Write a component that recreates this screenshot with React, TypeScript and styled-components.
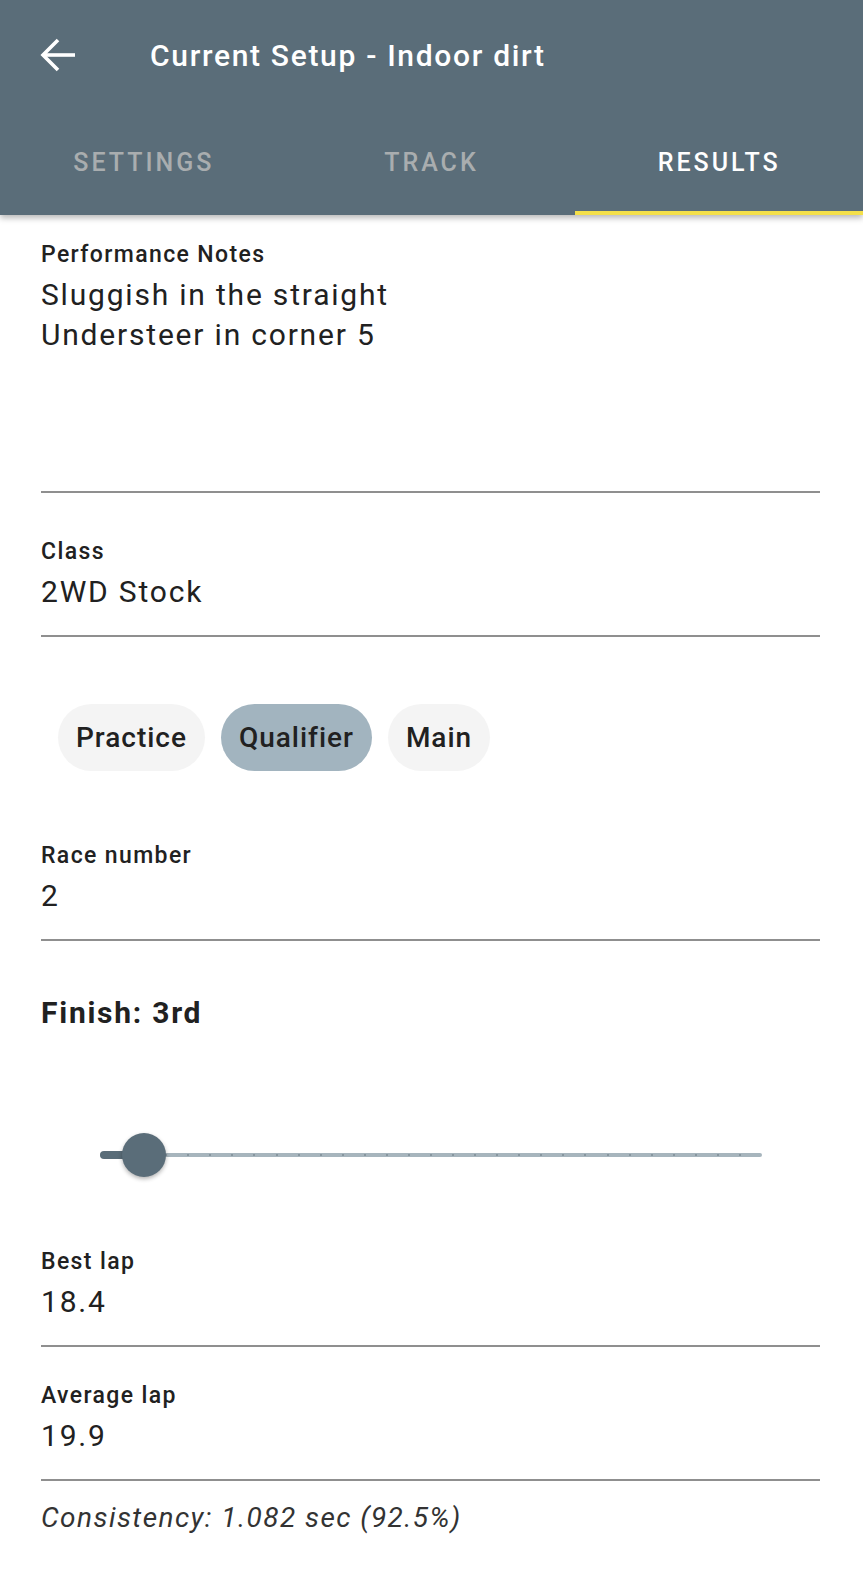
import styled, { createGlobalStyle } from "styled-components";

const Global = createGlobalStyle`
  body {
    margin: 0;
    background: #ffffff;
    font-family: Roboto, "Noto Sans", "Liberation Sans", sans-serif;
    color: #212121;
  }
  * { box-sizing: border-box; }
`;

const Header = styled.header`
  background: #5a6d79;
  box-shadow: 0 3px 6px rgba(0, 0, 0, 0.28);
  position: relative;
  z-index: 1;
`;

const Toolbar = styled.div`
  height: 110px;
  display: flex;
  align-items: center;
  padding-left: 40px;
`;

const Back = styled.button`
  width: 36px;
  height: 36px;
  padding: 0;
  border: none;
  background: none;
  display: flex;
  color: #fff;
`;

const Title = styled.h1`
  margin: 0 0 0 74px;
  font-size: 30px;
  font-weight: 500;
  color: #ffffff;
  letter-spacing: 0.056em;
`;

const Tabs = styled.nav`
  display: grid;
  grid-template-columns: repeat(3, 1fr);
  height: 105px;
`;

const Tab = styled.button<{ $active?: boolean }>`
  border: none;
  background: none;
  font-family: inherit;
  font-size: 25px;
  font-weight: 500;
  letter-spacing: 0.12em;
  text-transform: uppercase;
  color: ${(p) => (p.$active ? "#ffffff" : "#a9adaf")};
  border-bottom: 4px solid ${(p) => (p.$active ? "#f4e04a" : "transparent")};
  padding-top: 4px;
`;

const Content = styled.main`
  padding: 0 43px 40px 41px;
`;

const Field = styled.div<{ $top: number }>`
  margin-top: ${(p) => p.$top}px;
  padding-bottom: 23px;
  border-bottom: 2px solid #8f8f8f;
`;

const Label = styled.div`
  font-size: 23px;
  line-height: 26px;
  font-weight: 500;
  letter-spacing: 0.06em;
  color: #212121;
`;

const Value = styled.div<{ $minHeight?: number }>`
  margin-top: 7px;
  font-size: 30px;
  line-height: 40px;
  letter-spacing: 0.06em;
  color: #212121;
  min-height: ${(p) => p.$minHeight ?? 40}px;
`;

const Chips = styled.div`
  margin-top: 67px;
  padding-left: 17px;
  display: flex;
  gap: 16px;
`;

const Chip = styled.button<{ $selected?: boolean }>`
  height: 67px;
  padding: 0 18px;
  border: none;
  border-radius: 34px;
  font-family: inherit;
  font-size: 28px;
  font-weight: 500;
  letter-spacing: 0.035em;
  color: #212121;
  background: ${(p) => (p.$selected ? "#a2b4bf" : "#f4f4f4")};
`;

const Heading = styled.h2`
  margin: 52px 0 0;
  font-size: 30px;
  line-height: 40px;
  font-weight: 700;
  letter-spacing: 0.058em;
  color: #212121;
`;

const Slider = styled.div`
  position: relative;
  height: 44px;
  margin: 100px 58px 0 59px;
  display: flex;
  align-items: center;
`;

const Track = styled.div`
  position: relative;
  width: 100%;
  height: 4px;
  border-radius: 2px;
  background: #a7b5bd;
`;

const Active = styled.div`
  position: absolute;
  left: 0;
  top: -2px;
  height: 8px;
  border-radius: 4px;
  background: #5a6d79;
`;

const Tick = styled.span`
  position: absolute;
  top: 1px;
  width: 2px;
  height: 2px;
  margin-left: -1px;
  border-radius: 1px;
  background: #7d8d96;
`;

const Thumb = styled.div`
  position: absolute;
  top: 0;
  width: 44px;
  height: 44px;
  margin-left: -22px;
  border-radius: 50%;
  background: #5a6d79;
  box-shadow: 0 2px 4px rgba(0, 0, 0, 0.3);
`;

const Note = styled.p`
  margin: 19px 0 0;
  font-size: 28px;
  line-height: 36px;
  font-style: italic;
  letter-spacing: 0.051em;
  color: #333333;
`;

const STEPS = 30;
const VALUE = 2;

export default function App() {
  const pct = (VALUE / STEPS) * 100;
  return (
    <>
      <Global />
      <Header>
        <Toolbar>
          <Back aria-label="Back">
            <svg width="36" height="36" viewBox="0 0 36 36" fill="none" stroke="#fff" strokeWidth="3.6">
              <path d="M35 18H3" />
              <path d="M18 3L3 18l15 15" strokeLinejoin="miter" />
            </svg>
          </Back>
          <Title>Current Setup - Indoor dirt</Title>
        </Toolbar>
        <Tabs>
          <Tab>Settings</Tab>
          <Tab>Track</Tab>
          <Tab $active>Results</Tab>
        </Tabs>
      </Header>
      <Content>
        <Field $top={27}>
          <Label>Performance Notes</Label>
          <Value $minHeight={193}>
            Sluggish in the straight
            <br />
            Understeer in corner 5
          </Value>
        </Field>
        <Field $top={46}>
          <Label>Class</Label>
          <Value>2WD Stock</Value>
        </Field>
        <Chips>
          <Chip>Practice</Chip>
          <Chip $selected>Qualifier</Chip>
          <Chip>Main</Chip>
        </Chips>
        <Field $top={72}>
          <Label>Race number</Label>
          <Value>2</Value>
        </Field>
        <Heading>Finish: 3rd</Heading>
        <Slider>
          <Track>
            {Array.from({ length: STEPS - 1 }, (_, i) => i + 1)
              .filter((i) => i > VALUE)
              .map((i) => (
                <Tick key={i} style={{ left: `${(i / STEPS) * 100}%` }} />
              ))}
            <Active style={{ width: `${pct}%` }} />
          </Track>
          <Thumb style={{ left: `${pct}%` }} />
        </Slider>
        <Field $top={72}>
          <Label>Best lap</Label>
          <Value>18.4</Value>
        </Field>
        <Field $top={36}>
          <Label>Average lap</Label>
          <Value>19.9</Value>
        </Field>
        <Note>Consistency: 1.082 sec (92.5%)</Note>
      </Content>
    </>
  );
}
